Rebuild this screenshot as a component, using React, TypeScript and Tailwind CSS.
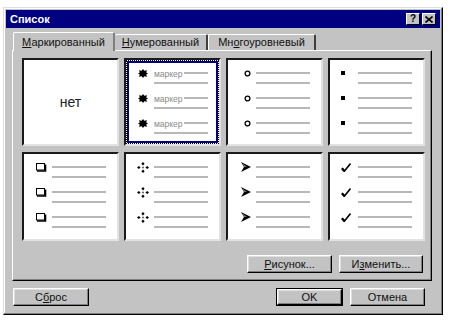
import { ReactNode } from "react";

const font = { fontFamily: '"Liberation Sans", Arial, sans-serif' };

function U({ children }: { children: ReactNode }) {
  return <span className="underline underline-offset-[1px]">{children}</span>;
}

function Btn({ children, w, dflt }: { children: ReactNode; w: string; dflt?: boolean }) {
  const inner = (
    <div className="h-full w-full flex items-center justify-center border border-t-white border-l-white border-r-black border-b-black shadow-[inset_-1px_-1px_0_#808080,inset_1px_1px_0_#dfdfdf] text-[11px] text-[#111]">
      {children}
    </div>
  );
  return (
    <div className={`${w} h-[18px] ${dflt ? "border border-black" : ""}`}>
      {inner}
    </div>
  );
}

// bullets ------------------------------------------------------------
const Star = () => (
  <svg width="10" height="9" viewBox="0 0 10 9" className="ml-[1px]">
    <polygon points="5,0 6.3,1.8 9,1.2 8.2,3.6 10,4.5 8.2,5.4 9,7.8 6.3,7.2 5,9 3.7,7.2 1,7.8 1.8,5.4 0,4.5 1.8,3.6 1,1.2 3.7,1.8" fill="#000" />
  </svg>
);
const Circle = () => (
  <svg width="7" height="7" viewBox="0 0 7 7" className="ml-[5px]">
    <circle cx="3.5" cy="3.5" r="2.4" fill="none" stroke="#000" strokeWidth="1.3" />
  </svg>
);
const Square = () => <div className="w-[4px] h-[4px] bg-black" />;
const BoxBullet = () => (
  <svg width="11" height="9" viewBox="0 0 11 9" className="ml-[1px]">
    <rect x="0.5" y="0.5" width="8" height="6.5" fill="#fff" stroke="#000" strokeWidth="1" />
    <path d="M1 8 H9.5 V1.5" fill="none" stroke="#000" strokeWidth="1.6" />
  </svg>
);
const Diamonds = () => (
  <svg width="12" height="11" viewBox="0 0 12 11">
    <polygon points="6,0 7.6,1.8 6,3.6 4.4,1.8" fill="#000" />
    <polygon points="6,7.4 7.6,9.2 6,11 4.4,9.2" fill="#000" />
    <polygon points="0,5.5 1.8,3.9 3.6,5.5 1.8,7.1" fill="#000" />
    <polygon points="8.4,5.5 10.2,3.9 12,5.5 10.2,7.1" fill="#000" />
    <rect x="5.2" y="4.7" width="1.6" height="1.6" fill="#444" />
  </svg>
);
const Arrow = () => (
  <svg width="10" height="10" viewBox="0 0 10 10" className="ml-[2px]">
    <polygon points="0,0 10,5 0,10 3,5" fill="#000" />
    <polygon points="1.5,1.5 6,5 3,5" fill="#777" />
  </svg>
);
const Check = () => (
  <svg width="10" height="9" viewBox="0 0 10 9">
    <path d="M1 5 L3.5 8 L9.5 0.5" fill="none" stroke="#000" strokeWidth="1.6" />
    <path d="M1 5.5 L3.5 8.3" fill="none" stroke="#000" strokeWidth="2.2" />
  </svg>
);

function Item({ bullet, label }: { bullet: ReactNode; label?: string }) {
  return (
    <div className="flex">
      <div className="w-[17px] h-[2px] flex items-center overflow-visible">{bullet}</div>
      <div className="flex flex-col gap-[8px] w-[54px]">
        {label ? (
          <div className="h-[2px] flex items-center overflow-visible">
            <span className="text-[8.5px] leading-none text-[#8a8a8a] pr-[1px] mt-[3px]">{label}</span>
            <div className="flex-1 h-[2px] bg-[#b8b8b8]" />
          </div>
        ) : (
          <div className="h-[2px] bg-[#b8b8b8]" />
        )}
        <div className="h-[2px] bg-[#b8b8b8]" />
      </div>
    </div>
  );
}

function Cell({ children, selected }: { children: ReactNode; selected?: boolean }) {
  return (
    <div className="w-[97px] h-full border-2 border-t-[#1a1a1a] border-l-[#1a1a1a] border-b-[#e2e2e2] border-r-[#e2e2e2] bg-white">
      {selected ? (
        <div className="h-full w-full border border-dotted border-black">
          <div className="h-full w-full border-2 border-[#000080]">{children}</div>
        </div>
      ) : (
        children
      )}
    </div>
  );
}

function BulletCell({ bullet, label, selected }: { bullet: ReactNode; label?: string; selected?: boolean }) {
  return (
    <Cell selected={selected}>
      <div className={`flex flex-col gap-[13px] ${selected ? "pt-[9px] pl-[8px]" : "pt-[12px] pl-[11px]"}`}>
        <Item bullet={bullet} label={label} />
        <Item bullet={bullet} label={label} />
        <Item bullet={bullet} label={label} />
      </div>
    </Cell>
  );
}

export default function App() {
  return (
    <div className="w-[457px] h-[324px] bg-white overflow-hidden pt-[7px] pl-[3px]" style={font}>
      <div className="w-[440px] h-[308px] bg-[#c3c3c3] border border-t-[#dfdfdf] border-l-[#dfdfdf] border-r-black border-b-black shadow-[inset_-1px_-1px_0_#808080,inset_1px_1px_0_#fff] p-[2px] flex flex-col">
        {/* title bar */}
        <div className="h-[18px] bg-[#000080] flex items-center justify-between pl-[4px] pr-[4px]">
          <span className="text-white text-[11px] font-bold">Список</span>
          <div className="flex gap-[2px]">
            <div className="w-[14px] h-[12px] bg-[#c3c3c3] border border-t-white border-l-white border-r-black border-b-black flex items-center justify-center text-[10px] font-bold leading-none text-black">?</div>
            <div className="w-[14px] h-[12px] bg-[#c3c3c3] border border-t-white border-l-white border-r-black border-b-black flex items-center justify-center">
              <svg width="8" height="7" viewBox="0 0 8 7">
                <path d="M0.5 0.5 L7.5 6.5 M7.5 0.5 L0.5 6.5" stroke="#000" strokeWidth="1.6" />
              </svg>
            </div>
          </div>
        </div>

        {/* tabs */}
        <div className="pl-[6px] pr-[8px] mt-[4px] flex flex-col">
          <div className="flex items-end h-[18px] pl-[1px]">
            <div className="relative z-10 w-[102px] h-[19px] -mb-[1px] bg-[#c3c3c3] border-t border-l border-t-white border-l-white border-r-2 border-r-[#808080] rounded-t-[2px] flex items-center justify-center text-[11px] text-[#111]">
              <span><U>М</U>аркированный</span>
            </div>
            <div className="w-[93px] h-[16px] bg-[#c3c3c3] border-t border-t-white border-r-2 border-r-[#404040] rounded-t-[2px] flex items-center justify-center text-[11px] text-[#111]">
              <span><U>Н</U>умерованный</span>
            </div>
            <div className="w-[108px] h-[16px] bg-[#c3c3c3] border-t border-l border-t-white border-l-white border-r-2 border-r-[#404040] rounded-t-[2px] flex items-center justify-center text-[11px] text-[#111]">
              <span>Мн<U>о</U>гоуровневый</span>
            </div>
          </div>

          {/* panel */}
          <div className="h-[231px] border border-t-white border-l-white border-r-black border-b-black shadow-[inset_-1px_-1px_0_#808080] pt-[7px] pl-[9px] pr-[8px] flex flex-col">
            <div className="grid grid-cols-[97px_97px_97px_97px] grid-rows-[88px_89px] gap-x-[5px] gap-y-[6px]">
              <Cell>
                <div className="h-full flex items-center justify-center text-[14px] text-[#222]">нет</div>
              </Cell>
              <BulletCell bullet={<Star />} label="маркер" selected />
              <BulletCell bullet={<Circle />} />
              <BulletCell bullet={<Square />} />
              <BulletCell bullet={<BoxBullet />} />
              <BulletCell bullet={<Diamonds />} />
              <BulletCell bullet={<Arrow />} />
              <BulletCell bullet={<Check />} />
            </div>
            <div className="flex justify-end gap-[7px] mt-[14px]">
              <Btn w="w-[85px]"><span><U>Р</U>исунок...</span></Btn>
              <Btn w="w-[84px]"><span>И<U>з</U>менить...</span></Btn>
            </div>
          </div>
        </div>

        {/* bottom buttons */}
        <div className="flex items-center mt-[7px] pl-[7px] pr-[15px]">
          <Btn w="w-[76px]"><span>С<U>б</U>рос</span></Btn>
          <div className="flex-1" />
          <Btn w="w-[67px]" dflt>OK</Btn>
          <div className="w-[7px]" />
          <Btn w="w-[75px]">Отмена</Btn>
        </div>
      </div>
    </div>
  );
}
